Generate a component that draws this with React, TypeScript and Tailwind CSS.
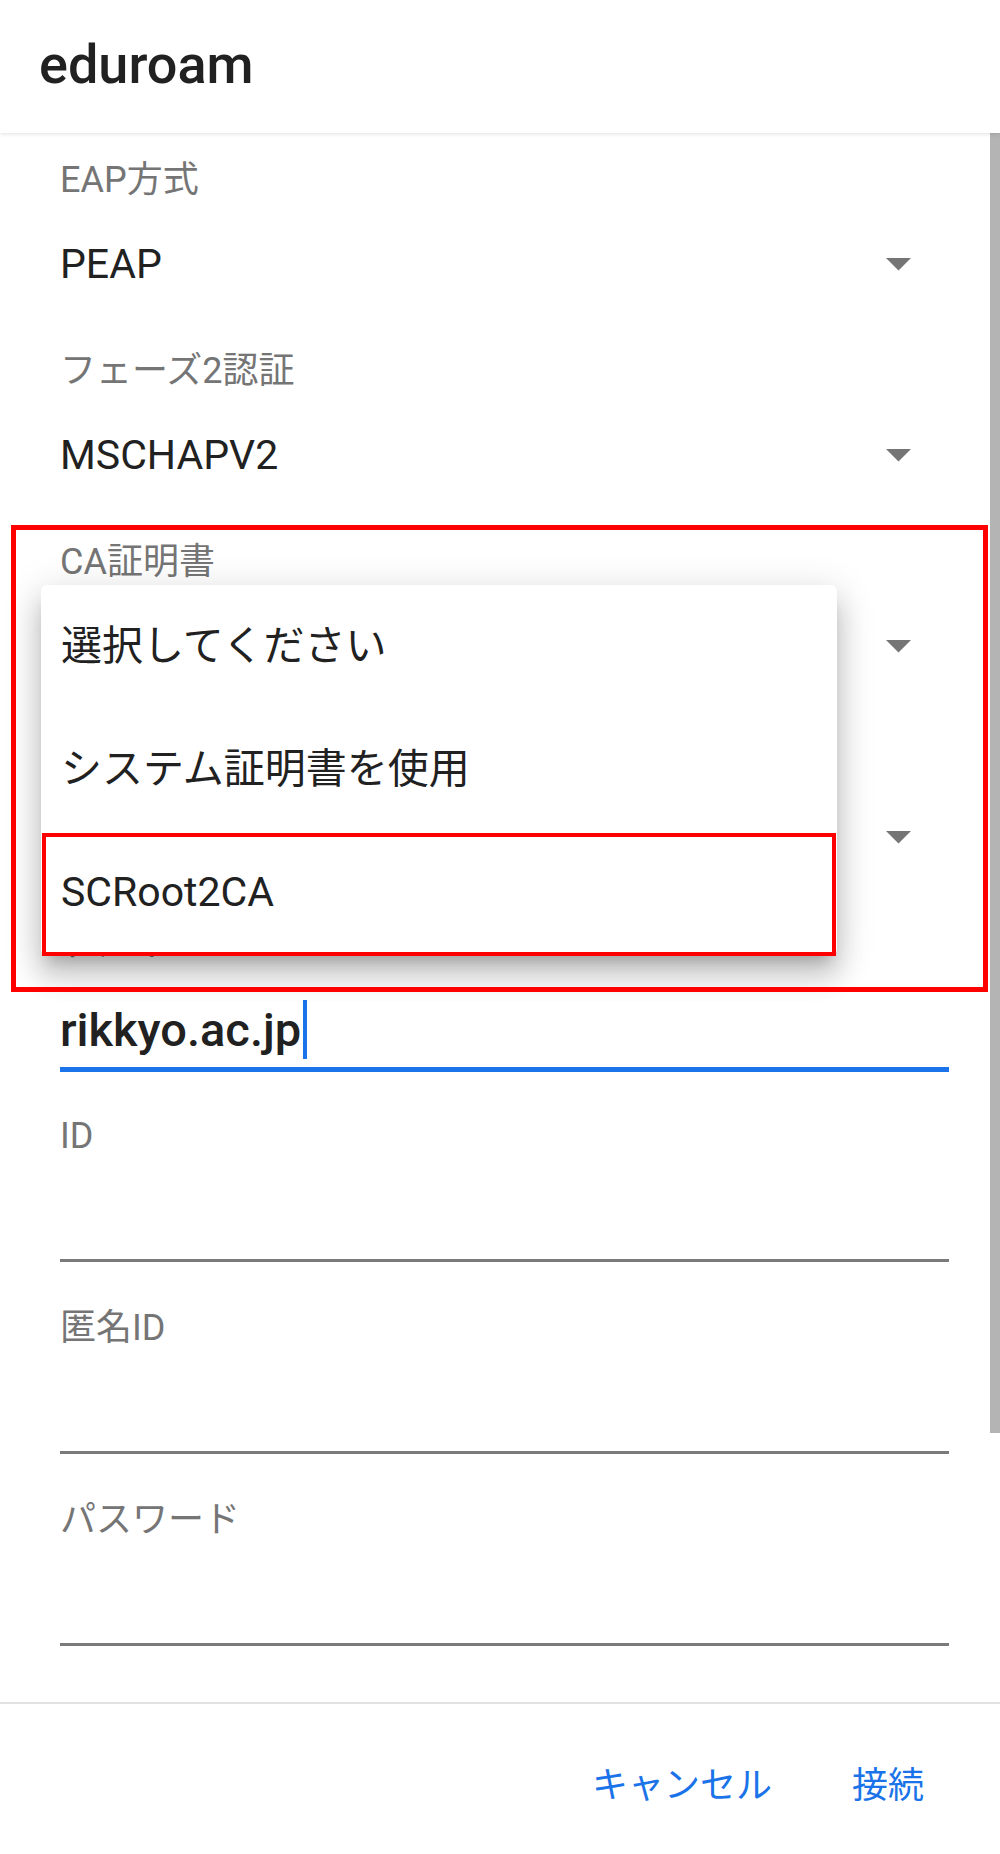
import React from "react";

function Arrow() {
  return (
    <svg width="25" height="13" viewBox="0 0 25 13" className="mr-[38px] shrink-0">
      <polygon points="0,0 25,0 12.5,12.5" fill="#757575" />
    </svg>
  );
}

function Dropdown({ label, value }: { label: string; value: string }) {
  return (
    <div className="flex h-[191px] flex-col">
      <div className="h-[44px] text-[36px] leading-[44px] text-[#757575]">{label}</div>
      <div className="flex h-[124px] items-center justify-between">
        <span className="text-[41px] leading-[50px] text-[#212121]">{value}</span>
        <Arrow />
      </div>
    </div>
  );
}

function EditField({ label, value, focused }: { label: string; value?: string; focused?: boolean }) {
  return (
    <div className="flex flex-col">
      <div className="h-[44px] text-[36px] leading-[44px] text-[#757575]">{label}</div>
      <div className="h-[101px] pt-[34px]">
        {value !== undefined && (
          <div className="flex h-[59px] items-center">
            <span className="text-[47px] font-medium leading-[56px] text-[#212121]">{value}</span>
            {focused && <span className="ml-[2px] h-[59px] w-[4px] bg-[#1a73e8]" />}
          </div>
        )}
      </div>
      {focused ? (
        <div className="mb-[42px] h-[5px] bg-[#1a73e8]" />
      ) : (
        <div className="mb-[44px] h-[3px] bg-[#7a7a7a]" />
      )}
    </div>
  );
}

export default function App() {
  return (
    <div className="relative h-[1854px] w-[1000px] overflow-hidden bg-white font-[Roboto,'Noto_Sans_CJK_JP',sans-serif]">
      <div className="relative z-10 flex h-[133px] items-center bg-white pb-[4px] pl-[39px] shadow-[0_1px_4px_rgba(0,0,0,0.12)]">
        <span className="text-[54px] font-medium text-[#212121]">eduroam</span>
      </div>

      <div className="h-[1569px] overflow-hidden pl-[60px] pr-[51px] pt-[25px]">
        <Dropdown label="EAP方式" value="PEAP" />
        <Dropdown label="フェーズ2認証" value="MSCHAPV2" />
        <Dropdown label="CA証明書" value="" />
        <Dropdown label="" value="" />
        <EditField label="ドメイン" value="rikkyo.ac.jp" focused />
        <EditField label="ID" />
        <EditField label="匿名ID" />
        <EditField label="パスワード" />
      </div>

      <div className="h-[2px] bg-[#e2e2e2]" />

      <div className="flex h-[150px] items-center justify-end gap-[80px] pr-[76px] pt-[14px] text-[36px] text-[#1a73e8]">
        <span>キャンセル</span>
        <span>接続</span>
      </div>

      {/* scroll indicator */}
      <div className="absolute right-0 top-[133px] h-[1300px] w-[10px] bg-[#b4b4b4]" />

      {/* dropdown popup */}
      <div className="absolute left-[41px] top-[585px] z-20 w-[796px] rounded-[6px] bg-white shadow-[0_13px_13px_-8px_rgba(0,0,0,0.2),0_21px_26px_3px_rgba(0,0,0,0.14),0_8px_37px_5px_rgba(0,0,0,0.12)]">
        <div className="flex h-[123px] items-center pl-[20px] text-[41px] text-[#212121]">選択してください</div>
        <div className="flex h-[123px] items-center pl-[20px] text-[41px] text-[#212121]">システム証明書を使用</div>
        <div className="flex h-[124px] items-center pl-[20px] text-[41px] text-[#212121]">SCRoot2CA</div>
      </div>

      {/* annotation boxes */}
      <div className="absolute left-[11px] top-[525px] z-30 h-[467px] w-[977px] border-[5px] border-[#ff0000]" />
      <div className="absolute left-[42px] top-[833px] z-30 h-[123px] w-[794px] border-[4px] border-[#ff0000]" />
    </div>
  );
}
